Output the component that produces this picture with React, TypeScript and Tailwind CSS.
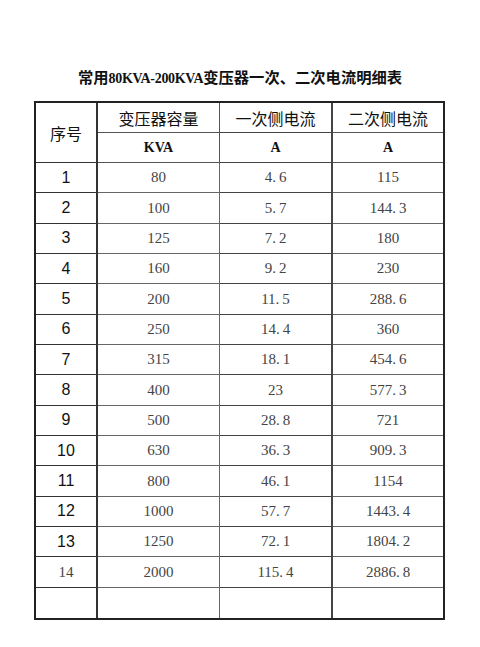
import React from "react";

const rows: [string, string, string, string][] = [
  ["1", "80", "4.6", "115"],
  ["2", "100", "5.7", "144.3"],
  ["3", "125", "7.2", "180"],
  ["4", "160", "9.2", "230"],
  ["5", "200", "11.5", "288.6"],
  ["6", "250", "14.4", "360"],
  ["7", "315", "18.1", "454.6"],
  ["8", "400", "23", "577.3"],
  ["9", "500", "28.8", "721"],
  ["10", "630", "36.3", "909.3"],
  ["11", "800", "46.1", "1154"],
  ["12", "1000", "57.7", "1443.4"],
  ["13", "1250", "72.1", "1804.2"],
  ["14", "2000", "115.4", "2886.8"],
  ["", "", "", ""],
];

const cjk = "font-['Noto_Sans_CJK_SC',sans-serif]";
const serif = "font-['Liberation_Serif','Noto_Sans_CJK_SC',serif]";
const sans = "font-['Liberation_Sans',Arial,sans-serif]";

function fmt(v: string) {
  const i = v.indexOf(".");
  if (i < 0) return v;
  return (
    <>
      {v.slice(0, i)}
      <span className="tracking-[3px]">.</span>
      {v.slice(i + 1)}
    </>
  );
}

export default function App() {
  return (
    <div className="w-[480px] h-[647px] bg-white overflow-hidden">
      <div className={`pt-[67px] h-[101px] text-center text-[15.3px] font-bold leading-[22px] text-[#111] ${serif}`}>
        常用<span className="text-[14px] tracking-[-0.3px]">80KVA-200KVA</span>变压器一次、二次电流明细表
      </div>
      <div className="ml-[34px] w-[411px] border-2 border-[#222] grid grid-cols-[62px_122px_113px_110px] grid-rows-[30px_30px_repeat(15,30.33px)]">
        <div className={`row-span-2 border-r-2 border-b border-[#333] flex items-center justify-center text-[16px] text-[#111] ${cjk}`}>
          序号
        </div>
        <div className={`border-r border-b border-[#555] flex items-center justify-center text-[16px] text-[#111] ${cjk}`}>
          变压器容量
        </div>
        <div className={`border-r-2 border-b border-[#444] flex items-center justify-center text-[16px] text-[#111] ${cjk}`}>
          一次侧电流
        </div>
        <div className={`border-b border-[#555] flex items-center justify-center text-[16px] text-[#111] ${cjk}`}>
          二次侧电流
        </div>
        <div className={`border-r border-b border-[#555] flex items-center justify-center text-[14px] font-bold text-[#111] ${serif}`}>
          KVA
        </div>
        <div className={`border-r-2 border-b border-[#444] flex items-center justify-center text-[14px] font-bold text-[#111] ${serif}`}>
          A
        </div>
        <div className={`border-b border-[#555] flex items-center justify-center text-[14px] font-bold text-[#111] ${serif}`}>
          A
        </div>
        {rows.map((r, idx) => {
          const last = idx === rows.length - 1;
          const bb = last ? "" : "border-b";
          const isSerifNo = r[0] === "14";
          return (
            <React.Fragment key={idx}>
              <div
                className={`border-r-2 ${bb} border-[#333] flex items-center justify-center ${
                  isSerifNo ? `text-[15px] text-[#444] ${serif}` : `text-[16px] text-[#111] ${sans}`
                }`}
              >
                {r[0]}
              </div>
              <div className={`border-r ${bb} border-[#666] flex items-center justify-center text-[15px] text-[#444] ${serif}`}>
                {r[1]}
              </div>
              <div className={`border-r-2 ${bb} border-[#444] flex items-center justify-center text-[15px] text-[#444] ${serif}`}>
                {fmt(r[2])}
              </div>
              <div className={`${bb} border-[#666] flex items-center justify-center text-[15px] text-[#444] ${serif}`}>
                {fmt(r[3])}
              </div>
            </React.Fragment>
          );
        })}
      </div>
    </div>
  );
}
